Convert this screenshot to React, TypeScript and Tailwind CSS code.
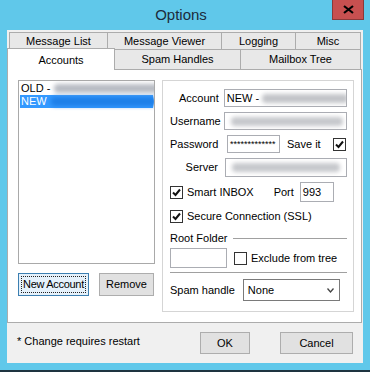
import React from 'react'

const font = { fontFamily: '"Liberation Sans", Arial, sans-serif' }

function Check({ checked = false }: { checked?: boolean }) {
  return (
    <div className="w-[13px] h-[13px] shrink-0 border border-[#333] bg-white flex items-center justify-center">
      {checked && (
        <svg width="9" height="9" viewBox="0 0 9 9">
          <path d="M1 4.5 L3.5 7 L8 1.5" stroke="#111" strokeWidth="2" fill="none" />
        </svg>
      )}
    </div>
  )
}

function Blur({ className }: { className: string }) {
  return <div className={`h-[9px] shrink-0 rounded-sm blur-[2px] ${className}`} />
}

export default function App() {
  return (
    <div className="w-[370px] h-[372px] bg-[#60c8ea] flex flex-col text-[11px] text-black whitespace-nowrap" style={font}>
      {/* title bar */}
      <div className="h-[30px] flex shrink-0">
        <div className="flex-1 flex items-center justify-center pl-[30px] pt-[1px] text-[15px] text-[#1c2c3c]">Options</div>
        <div className="w-[32px] h-[20px] mr-[6px] bg-[#c75050] border border-[#8a3a3a] border-t-0 flex items-center justify-center">
          <svg width="11" height="9" viewBox="0 0 11 9">
            <path d="M1 1 L10 8 M10 1 L1 8" stroke="#000" strokeWidth="2.2" />
          </svg>
        </div>
      </div>

      {/* client */}
      <div className="mx-[7px] h-[333px] bg-[#f0f0f0] flex flex-col">
        <div className="flex pl-[2px] mt-[2px] h-[17px]">
          {[
            ['Message List', 'w-[98px]'],
            ['Message Viewer', 'w-[114px]'],
            ['Logging', 'w-[74px]'],
            ['Misc', 'w-[66px]'],
          ].map(([t, w]) => (
            <div key={t} className={`${w} border border-b-0 border-r-0 last:border-r border-[#acacac] bg-[#e8e8e8] flex items-center justify-center`}>{t}</div>
          ))}
        </div>
        <div className="flex h-[20px] items-end">
          <div className="w-[108px] h-[22px] -mb-[1px] relative z-10 bg-white border border-b-0 border-[#acacac] flex items-start justify-center pt-[3px]">Accounts</div>
          <div className="w-[126px] h-[20px] border border-b-0 border-l-0 border-[#acacac] bg-[#e8e8e8] flex items-center justify-center">Spam Handles</div>
          <div className="w-[120px] h-[20px] border border-b-0 border-l-0 border-[#acacac] bg-[#e8e8e8] flex items-center justify-center">Mailbox Tree</div>
        </div>

        {/* tab page */}
        <div className="w-[355px] h-[254px] bg-white border border-[#acacac] flex pt-[10px] pl-[10px]">
          <div className="w-[137px] shrink-0 flex flex-col">
            <div className="h-[184px] border border-[#a9a9a9] p-[1px] flex flex-col overflow-hidden">
              <div className="flex items-center h-[13px] pl-[1px] gap-[4px]">
                <span>OLD -</span>
                <Blur className="w-[106px] bg-[#b8bcc4]" />
              </div>
              <div className="flex items-center h-[13px] pl-[1px] gap-[4px] bg-[#3399ff] text-white">
                <span>NEW</span>
                <Blur className="w-[106px] bg-[#1e7fe8]" />
              </div>
            </div>
            <div className="flex mt-[9px] gap-[10px]">
              <div className="w-[71px] h-[23px] border border-[#3c7fb1] bg-[#e5f1fb] p-[2px]">
                <div className="h-full border border-dotted border-[#222] flex items-center justify-center tracking-[-0.3px]">New Account</div>
              </div>
              <div className="w-[55px] h-[23px] border border-[#adadad] bg-[#e1e1e1] flex items-center justify-center">Remove</div>
            </div>
          </div>

          {/* group */}
          <div className="ml-[7px] w-[192px] h-[232px] shrink-0 border border-[#d5d5d5] flex flex-col pt-[8px] pl-[7px] pr-[6px]">
            <div className="flex items-center h-[18px]">
              <div className="w-[49px] text-right">Account</div>
              <div className="ml-[5px] w-[124px] h-[18px] border border-[#abadb3] flex items-center pl-[2px] gap-[3px] overflow-hidden">
                <span>NEW -</span>
                <Blur className="w-[86px] bg-[#c2c4c8]" />
              </div>
            </div>
            <div className="flex items-center h-[18px] mt-[5px]">
              <div className="w-[49px] text-right">Username</div>
              <div className="ml-[5px] w-[124px] h-[18px] border border-[#abadb3] flex items-center pl-[6px]">
                <Blur className="w-[112px] bg-[#c6c8cc]" />
              </div>
            </div>
            <div className="flex items-center h-[18px] mt-[5px]">
              <div className="w-[48px] text-right">Password</div>
              <div className="ml-[9px] w-[53px] h-[18px] border border-[#abadb3] flex items-start pt-[2px] pl-[2px] text-[9px] overflow-hidden">*************</div>
              <div className="ml-[7px]">Save it</div>
              <div className="ml-auto mr-[1px]"><Check checked /></div>
            </div>
            <div className="flex items-center h-[19px] mt-[5px]">
              <div className="w-[48px] text-right">Server</div>
              <div className="ml-[7px] w-[122px] h-[19px] border border-[#abadb3] flex items-center pl-[6px]">
                <Blur className="w-[108px] bg-[#c6c8cc]" />
              </div>
            </div>
            <div className="flex items-center h-[20px] mt-[5px]">
              <Check checked />
              <span className="ml-[4px]">Smart INBOX</span>
              <span className="ml-[20px]">Port</span>
              <div className="ml-[6px] w-[34px] h-[20px] border border-[#abadb3] flex items-center pl-[2px]">993</div>
            </div>
            <div className="flex items-center h-[13px] mt-[8px]">
              <Check checked />
              <span className="ml-[4px]">Secure Connection (SSL)</span>
            </div>
            <div className="flex items-center mt-[9px] h-[13px]">
              <span>Root Folder</span>
              <div className="flex-1 ml-[6px] h-[1px] bg-[#a0a0a0]" />
            </div>
            <div className="flex items-center mt-[3px] h-[20px]">
              <div className="w-[57px] h-[20px] border border-[#abadb3]" />
              <div className="ml-[7px]"><Check /></div>
              <span className="ml-[4px]">Exclude from tree</span>
            </div>
            <div className="h-[1px] bg-[#a0a0a0] mt-[4px]" />
            <div className="flex items-center mt-[6px] h-[22px]">
              <span>Spam handle</span>
              <div className="ml-[8px] w-[97px] h-[22px] border border-[#7a7a7a] flex items-center pl-[4px]">
                <span>None</span>
                <svg className="ml-auto mr-[5px]" width="7" height="5" viewBox="0 0 7 5">
                  <path d="M0.5 0.5 L3.5 4 L6.5 0.5" stroke="#444" strokeWidth="1.3" fill="none" />
                </svg>
              </div>
            </div>
          </div>
        </div>

        {/* footer */}
        <div className="flex-1 flex items-center pl-[10px] pr-[10px]">
          <span className="-mt-[4px]">* Change requires restart</span>
          <div className="ml-auto flex gap-[30px]">
            <div className="w-[50px] h-[22px] border border-[#adadad] bg-[#e1e1e1] flex items-center justify-center">OK</div>
            <div className="w-[73px] h-[22px] border border-[#adadad] bg-[#e1e1e1] flex items-center justify-center">Cancel</div>
          </div>
        </div>
      </div>
      <div className="flex-1" />
      <div className="h-[2px] bg-[#1e3440]" />
    </div>
  )
}
